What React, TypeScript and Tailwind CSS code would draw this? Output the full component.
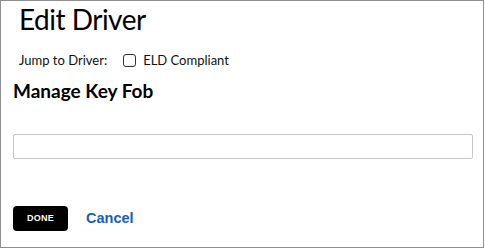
import React from "react";

export default function App() {
  return (
    <div className="w-[484px] h-[248px] border border-[#8f8f8f] bg-white overflow-hidden">
      <div className="pl-[12px] pr-[11px] flex flex-col">
        <h1 className="ml-[6px] mt-[0px] text-[28px] leading-[36px] tracking-[-0.5px] text-black font-normal" style={{ fontFamily: 'Lato, sans-serif' }}>
          Edit Driver
        </h1>
        <div className="ml-[6px] mt-[14px] flex items-center text-[13px] leading-[18px] text-[#111]" style={{ fontFamily: 'Lato, sans-serif' }}>
          <span>Jump to Driver:</span>
          <label className="ml-[16px] flex items-center gap-[7px]">
            <span className="w-[13px] h-[13px] border border-[#333] rounded-[3px] bg-white inline-block"></span>
            <span>ELD Compliant</span>
          </label>
        </div>
        <h2 className="mt-[10px] text-[19px] leading-[24px] font-bold text-black" style={{ fontFamily: 'Lato, sans-serif' }}>
          Manage Key Fob
        </h2>
        <div className="mt-[31px] h-[25px] w-[460px] border border-[#c8c8c8] rounded-[2px] bg-white"></div>
        <div className="mt-[47px] flex items-center">
          <button className="w-[55px] h-[25px] bg-black text-white rounded-[4px] text-[9px] font-bold tracking-[0.3px]" style={{ fontFamily: '"Liberation Sans", Arial, sans-serif' }}>
            DONE
          </button>
          <span className="ml-[18px] text-[14.5px] font-bold text-[#1560bd]" style={{ fontFamily: '"Liberation Sans", Arial, sans-serif' }}>
            Cancel
          </span>
        </div>
      </div>
    </div>
  );
}
